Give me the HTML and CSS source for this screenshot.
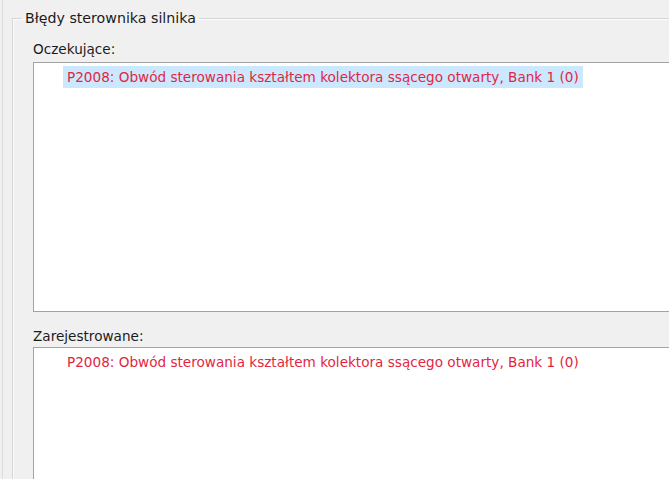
FILE: index.html
```html
<!DOCTYPE html>
<html lang="pl">
<head>
  <meta charset="UTF-8">
  <title>Błędy sterownika silnika</title>
  <link rel="stylesheet" href="styles.css">
</head>
<body>
  <div class="page">
    <fieldset class="group">
      <legend>Błędy sterownika silnika</legend>

      <div class="group-body">
        <div class="label">Oczekujące:</div>
        <div class="list list-pending">
          <div class="item selected">P2008: Obwód sterowania kształtem kolektora ssącego otwarty, Bank 1 (0)</div>
        </div>

        <div class="label label-stored">Zarejestrowane:</div>
        <div class="list list-stored">
          <div class="item">P2008: Obwód sterowania kształtem kolektora ssącego otwarty, Bank 1 (0)</div>
        </div>
      </div>
    </fieldset>
  </div>
</body>
</html>
```

FILE: styles.css
```css
* {
  box-sizing: border-box;
}
html, body {
  margin: 0;
  padding: 0;
  height: 100%;
  overflow: hidden;
}
body {
  font-family: "DejaVu Sans", "Liberation Sans", sans-serif;
  font-size: 13.6px;
  color: #1b1b1b;
  background: #f0f0f0;
}
.page {
  width: 669px;
  height: 100%;
  overflow: hidden;
  margin-left: 2px;
  padding-left: 9px;
  border-left: 1px solid #dcdcdc;
}
.group {
  width: 720px;
  margin: 10px 0 0 0;
  padding: 0;
  height: 520px;
  border: 1px solid #d6d6d6;
  box-shadow: inset 1px 1px 0 #fbfbfb;
}
.group legend {
  margin-left: 9px;
  padding: 0 3px;
  font-size: 14.2px;
  line-height: 17px;
}
.group-body {
  padding-left: 20px;
}
.label {
  line-height: 18px;
  margin-top: 13px;
  margin-bottom: 4px;
}
.label-stored {
  margin-top: 15px;
  margin-bottom: 2px;
}
.list {
  background: #fff;
  border: 1px solid #a3a3a3;
  padding-top: 3px;
  padding-left: 29px;
}
.list-pending {
  height: 250px;
}
.list-stored {
  height: 140px;
}
.item {
  display: inline-block;
  color: #e3263f;
  line-height: 22px;
  padding: 0 4px;
  white-space: nowrap;
}
.item.selected {
  background: #cce8ff;
}
```
